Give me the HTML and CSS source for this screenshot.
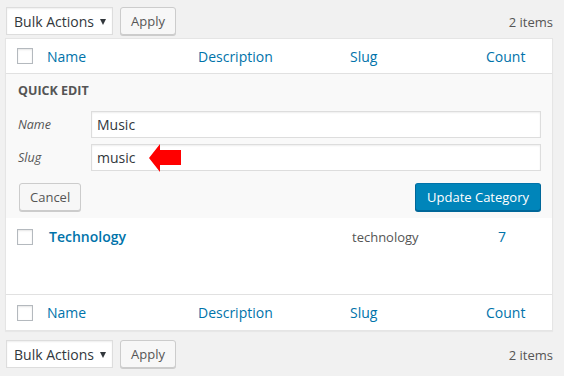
FILE: index.html
```html
<!DOCTYPE html>
<html>
<head>
<meta charset="utf-8">
<link rel="stylesheet" href="styles.css">
</head>
<body>
<div class="page">
  <div class="tablenav top">
    <div class="bulk">
      <div class="select"><span>Bulk Actions</span><i class="caret"></i></div>
      <div class="btn">Apply</div>
    </div>
    <div class="count-items">2 items</div>
  </div>

  <div class="table">
    <div class="row head">
      <div class="cell cb"><span class="checkbox"></span></div>
      <div class="cell">Name</div>
      <div class="cell">Description</div>
      <div class="cell">Slug</div>
      <div class="cell">Count</div>
    </div>

    <div class="quick-edit">
      <div class="legend">QUICK EDIT</div>
      <div class="field">
        <span class="label">Name</span>
        <div class="input">Music</div>
      </div>
      <div class="field slug-field">
        <span class="label">Slug</span>
        <div class="input">music
          <svg class="arrow" width="34" height="30" viewBox="0 0 34 30"><polygon points="1,15 12,1 12,7 33,7 33,22 12,22 12,29" fill="#ff0000"/></svg>
        </div>
      </div>
      <div class="actions">
        <div class="btn">Cancel</div>
        <div class="btn primary">Update Category</div>
      </div>
    </div>

    <div class="row body">
      <div class="cell cb"><span class="checkbox"></span></div>
      <div class="cell name"><a>Technology</a></div>
      <div class="cell"></div>
      <div class="cell slug">technology</div>
      <div class="cell num">7</div>
    </div>

    <div class="row foot">
      <div class="cell cb"><span class="checkbox"></span></div>
      <div class="cell">Name</div>
      <div class="cell">Description</div>
      <div class="cell">Slug</div>
      <div class="cell">Count</div>
    </div>
  </div>

  <div class="tablenav bottom">
    <div class="bulk">
      <div class="select"><span>Bulk Actions</span><i class="caret"></i></div>
      <div class="btn">Apply</div>
    </div>
    <div class="count-items">2 items</div>
  </div>
</div>
</body>
</html>
```

FILE: styles.css
```css
* { box-sizing: border-box; }
html, body { margin: 0; padding: 0; }
body {
  background: #f1f1f1;
  font-family: "Open Sans", "Liberation Sans", sans-serif;
  color: #444;
  width: 564px;
  height: 376px;
  overflow: hidden;
}
.page { padding: 7px 11px 0 5px; }

.tablenav {
  display: flex;
  justify-content: space-between;
  align-items: center;
  height: 28px;
}
.tablenav.top { margin-bottom: 3px; }
.tablenav.bottom { margin-top: 9px; }
.bulk { display: flex; gap: 7px; margin-left: 1px; }

.select {
  width: 107px;
  height: 28px;
  background: #fff;
  border: 1px solid #ddd;
  box-shadow: inset 0 1px 2px rgba(0,0,0,.07);
  display: flex;
  align-items: center;
  justify-content: space-between;
  padding: 0 6px 0 7px;
  font-size: 14px;
  color: #32373c;
}
.caret {
  width: 0; height: 0;
  border-left: 3px solid transparent;
  border-right: 3px solid transparent;
  border-top: 6px solid #32373c;
  margin-top: 1px;
}

.btn {
  height: 28px;
  line-height: 26px;
  padding: 0 10px;
  font-size: 13px;
  color: #555;
  background: #f7f7f7;
  border: 1px solid #ccc;
  border-radius: 3px;
  box-shadow: 0 1px 0 #ccc;
  white-space: nowrap;
}
.btn.primary {
  background: #0085ba;
  border-color: #0073aa #006799 #006799;
  box-shadow: 0 1px 0 #006799;
  color: #fff;
  padding: 0 11px;
}

.count-items { font-size: 13px; color: #555; margin-top: 1px; }

.table {
  background: #fff;
  border: 1px solid #e5e5e5;
  box-shadow: 0 1px 1px rgba(0,0,0,.04);
}
.row {
  display: grid;
  grid-template-columns: 31px 151px 152px 136px 1fr;
  align-items: center;
}
.row.head { height: 35px; border-bottom: 1px solid #e1e1e1; }
.row.foot { height: 36px; border-top: 1px solid #e1e1e1; }
.row.head .cell, .row.foot .cell {
  font-size: 14px;
  color: #0073aa;
  padding-left: 10px;
}
.cell.cb { padding-left: 11px !important; display: flex; }
.checkbox {
  width: 16px; height: 16px;
  border: 1px solid #b4b9be;
  background: #fff;
  box-shadow: inset 0 1px 2px rgba(0,0,0,.1);
  display: block;
}
.row.body {
  height: 76px;
  align-items: start;
  padding-top: 11px;
}
.row.body .cell { font-size: 13px; color: #555; padding-left: 12px; line-height: 16px; }
.row.body .cell.name a { font-size: 14px; font-weight: 600; color: #0073aa; }
.row.body .cell.num { padding-left: 22px; color: #0073aa; font-size: 14px; }
.row.body .cell.cb { margin-top: 0; }

.quick-edit {
  background: #f9f9f9;
  padding: 8px 11px 6px 12px;
  height: 144px;
}
.legend {
  font-size: 12.5px;
  font-weight: 700;
  color: #555;
  line-height: 18px;
  margin-bottom: 11px;
}
.field { display: flex; align-items: center; margin-bottom: 6px; }
.slug-field { margin-bottom: 12px; }
.label {
  width: 73px;
  font-size: 12.5px;
  font-style: italic;
  color: #555;
}
.input {
  flex: 1;
  height: 27px;
  line-height: 25px;
  background: #fff;
  border: 1px solid #ddd;
  box-shadow: inset 0 1px 2px rgba(0,0,0,.07);
  padding-left: 5px;
  font-size: 14px;
  color: #32373c;
  position: relative;
}
.arrow { position: absolute; left: 56px; top: -2px; }
.actions { display: flex; justify-content: space-between; padding-left: 1px; }
```
